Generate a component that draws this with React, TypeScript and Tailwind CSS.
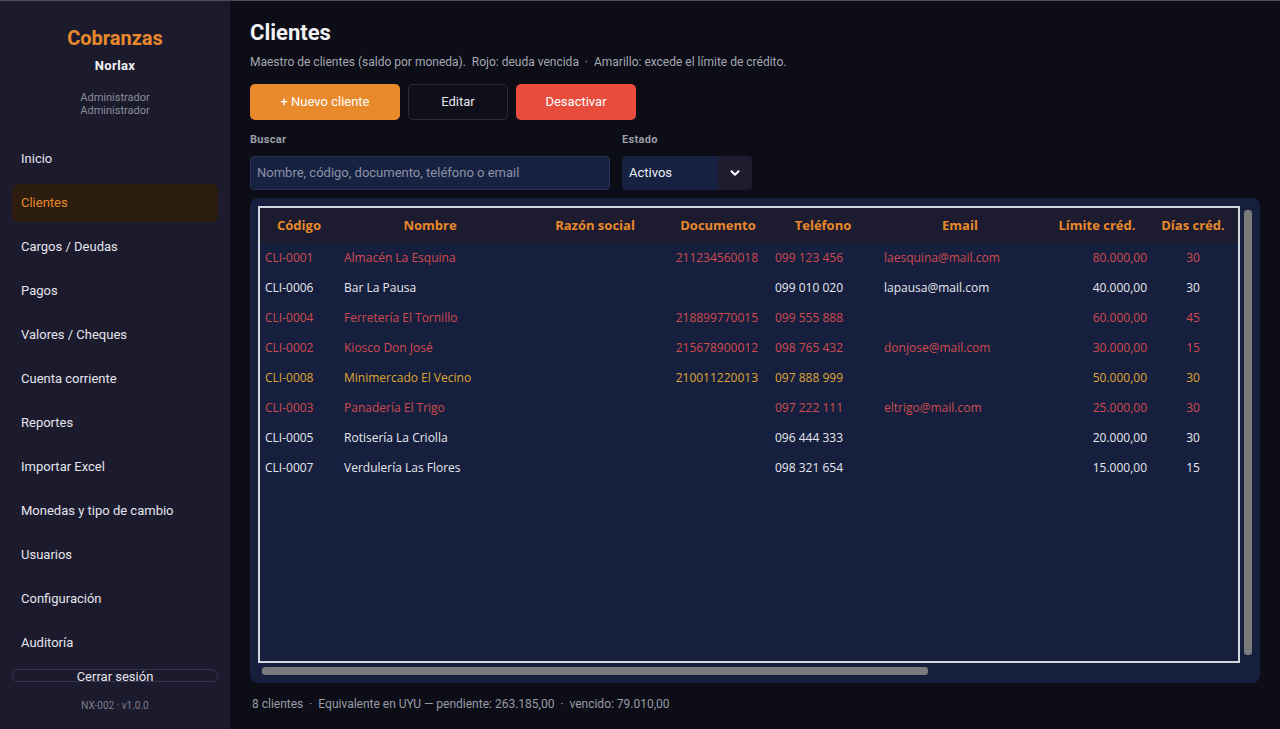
import { ChevronDown } from 'lucide-react'

type Tone = 'red' | 'white' | 'yellow'

type ClientRow = {
	code: string
	name: string
	razon: string
	doc: string
	phone: string
	email: string
	limit: string
	days: string
	tone: Tone
}

const navItems = [
	'Inicio',
	'Clientes',
	'Cargos / Deudas',
	'Pagos',
	'Valores / Cheques',
	'Cuenta corriente',
	'Reportes',
	'Importar Excel',
	'Monedas y tipo de cambio',
	'Usuarios',
	'Configuración',
	'Auditoría'
]

const clients: ClientRow[] = [
	{ code: 'CLI-0001', name: 'Almacén La Esquina', razon: '', doc: '211234560018', phone: '099 123 456', email: 'laesquina@mail.com', limit: '80.000,00', days: '30', tone: 'red' },
	{ code: 'CLI-0006', name: 'Bar La Pausa', razon: '', doc: '', phone: '099 010 020', email: 'lapausa@mail.com', limit: '40.000,00', days: '30', tone: 'white' },
	{ code: 'CLI-0004', name: 'Ferretería El Tornillo', razon: '', doc: '218899770015', phone: '099 555 888', email: '', limit: '60.000,00', days: '45', tone: 'red' },
	{ code: 'CLI-0002', name: 'Kiosco Don José', razon: '', doc: '215678900012', phone: '098 765 432', email: 'donjose@mail.com', limit: '30.000,00', days: '15', tone: 'red' },
	{ code: 'CLI-0008', name: 'Minimercado El Vecino', razon: '', doc: '210011220013', phone: '097 888 999', email: '', limit: '50.000,00', days: '30', tone: 'yellow' },
	{ code: 'CLI-0003', name: 'Panadería El Trigo', razon: '', doc: '', phone: '097 222 111', email: 'eltrigo@mail.com', limit: '25.000,00', days: '30', tone: 'red' },
	{ code: 'CLI-0005', name: 'Rotisería La Criolla', razon: '', doc: '', phone: '096 444 333', email: '', limit: '20.000,00', days: '30', tone: 'white' },
	{ code: 'CLI-0007', name: 'Verdulería Las Flores', razon: '', doc: '', phone: '098 321 654', email: '', limit: '15.000,00', days: '15', tone: 'white' }
]

const toneClass: Record<Tone, string> = {
	red: 'text-[#d04a4f]',
	white: 'text-[#e6e8ee]',
	yellow: 'text-[#dfa532]'
}

const headers = ['Código', 'Nombre', 'Razón social', 'Documento', 'Teléfono', 'Email', 'Límite créd.', 'Días créd.']

const gridCols = 'grid grid-cols-[78px_184px_146px_100px_110px_164px_110px_82px_200px]'

function Sidebar() {
	return (
		<aside className="w-[230px] shrink-0 bg-[#1c1b2e] flex flex-col items-stretch px-3 pt-[24px] font-['Roboto',sans-serif]">
			<h1 className="text-center text-[20px] leading-[26px] font-bold text-[#e8892b]">Cobranzas</h1>
			<p className="mt-[2px] text-center text-[13px] leading-[26px] font-bold tracking-[0.4px] text-[#f2f2f5]">Norlax</p>
			<div className="mt-[12px] text-center text-[11px] leading-[13px] text-[#8b8d99]">
				<p>Administrador</p>
				<p>Administrador</p>
			</div>
			<nav className="mt-[23px] flex flex-col gap-[6px]">
				{navItems.map((item) => (
					<div
						key={item}
						className={
							item === 'Clientes'
								? 'h-[38px] flex items-center pl-[9px] rounded-md bg-[#2b1c0e] text-[13px] text-[#e8892b]'
								: 'h-[38px] flex items-center pl-[9px] rounded-md text-[13px] text-[#e4e4ec]'
						}
					>
						{item}
					</div>
				))}
			</nav>
			<div className="mt-[7px] h-[13px] overflow-hidden rounded-md border border-[#34344a] text-center text-[13px] leading-[14px] text-[#e4e4ec]">
				Cerrar sesión
			</div>
			<p className="mt-[17px] text-center text-[10px] leading-[14px] text-[#7d7f8c]">NX-002 · v1.0.0</p>
		</aside>
	)
}

function ClientsTable() {
	return (
		<div className="mt-[8px] h-[485px] rounded-lg bg-[#16203e] p-2 pb-0 flex flex-col">
			<div className="flex gap-[4px]">
				<div className="w-[982px] h-[457px] border-2 border-[#d3d7de] overflow-hidden font-['Open_Sans',sans-serif]">
					<div className={`${gridCols} h-[35px] items-center bg-[#1c1b2f] text-[13px] font-bold text-[#e8892b]`}>
						{headers.map((h) => (
							<div key={h} className="text-center whitespace-nowrap">
								{h}
							</div>
						))}
						<div />
					</div>
					{clients.map((c) => (
						<div key={c.code} className={`${gridCols} h-[30px] items-center text-[12px] whitespace-nowrap ${toneClass[c.tone]}`}>
							<div className="pl-[5px]">{c.code}</div>
							<div className="pl-[6px]">{c.name}</div>
							<div className="pl-[6px]">{c.razon}</div>
							<div className="pr-[10px] text-right">{c.doc}</div>
							<div className="pl-[7px]">{c.phone}</div>
							<div className="pl-[6px]">{c.email}</div>
							<div className="pr-[5px] text-right">{c.limit}</div>
							<div className="text-center">{c.days}</div>
							<div />
						</div>
					))}
				</div>
				<div className="mt-[4px] h-[445px] w-[8px] rounded-[3px] bg-[#7a7a7c]" />
			</div>
			<div className="mt-[4px] ml-[4px] h-[8px] w-[666px] rounded-[3px] bg-[#7a7a7c]" />
		</div>
	)
}

export default function App() {
	return (
		<div className="w-[1280px] h-[729px] overflow-hidden border-t border-[#4d4d58] bg-[#0c0d16] flex">
			<Sidebar />
			<main className="flex-1 px-5 pt-[19px] font-['Roboto',sans-serif]">
				<h2 className="text-[22px] leading-[26px] font-bold text-[#f2f2f5]">Clientes</h2>
				<p className="mt-[8px] text-[12px] leading-[16px] text-[#a5a7b2] whitespace-pre">
					{'Maestro de clientes (saldo por moneda).  Rojo: deuda vencida  ·  Amarillo: excede el límite de crédito.'}
				</p>
				<div className="mt-[14px] flex gap-2 text-[13px]">
					<button className="h-[36px] w-[150px] rounded-[5px] bg-[#e8892b] text-white">+ Nuevo cliente</button>
					<button className="h-[36px] w-[100px] rounded-[5px] border border-[#2c2d3c] bg-[#0e0f1a] text-[#e6e6ee]">Editar</button>
					<button className="h-[36px] w-[120px] rounded-[5px] bg-[#e74c3c] text-white">Desactivar</button>
				</div>
				<div className="mt-[13px] flex gap-3">
					<div className="flex flex-col">
						<label className="text-[11px] leading-[14px] font-bold tracking-[0.3px] text-[#9a9ca7]">Buscar</label>
						<div className="mt-[9px] h-[34px] w-[360px] rounded-[4px] border border-[#283154] bg-[#172142] flex items-center pl-[6px] text-[13px] text-[#8c92a3]">
							Nombre, código, documento, teléfono o email
						</div>
					</div>
					<div className="flex flex-col">
						<label className="text-[11px] leading-[14px] font-bold tracking-[0.3px] text-[#9a9ca7]">Estado</label>
						<div className="mt-[9px] h-[34px] w-[130px] rounded-[4px] overflow-hidden flex text-[13px]">
							<div className="flex-1 bg-[#172142] flex items-center pl-[7px] text-[#eef0f5]">Activos</div>
							<div className="w-[34px] bg-[#1e1d30] flex items-center justify-center text-white">
								<ChevronDown size={14} strokeWidth={3.5} />
							</div>
						</div>
					</div>
				</div>
				<ClientsTable />
				<p className="mt-[13px] pl-[2px] text-[12px] leading-[16px] text-[#9a9ca6] whitespace-pre">
					{'8 clientes  ·  Equivalente en UYU — pendiente: 263.185,00  ·  vencido: 79.010,00'}
				</p>
			</main>
		</div>
	)
}
